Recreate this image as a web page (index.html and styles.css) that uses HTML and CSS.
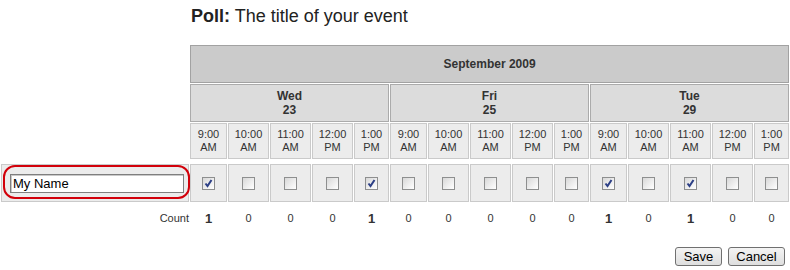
FILE: index.html
```html
<!DOCTYPE html>
<html>
<head>
<meta charset="utf-8">
<link rel="stylesheet" href="styles.css">
</head>
<body>
<h1 class="title"><b>Poll:</b> The title of your event</h1>
<table class="poll">
  <colgroup>
    <col class="c-name">
    <col class="c37"><col class="c41"><col class="c41"><col class="c41"><col class="c35">
    <col class="c37"><col class="c41"><col class="c41"><col class="c41"><col class="c35">
    <col class="c37"><col class="c41"><col class="c41"><col class="c41"><col class="c35">
  </colgroup>
  <tr class="month">
    <td class="blank"></td>
    <th colspan="15">September 2009</th>
  </tr>
  <tr class="days">
    <td class="blank"></td>
    <th colspan="5">Wed<br>23</th>
    <th colspan="5">Fri<br>25</th>
    <th colspan="5">Tue<br>29</th>
  </tr>
  <tr class="times">
    <td class="blank"></td>
    <td>9:00<br>AM</td><td>10:00<br>AM</td><td>11:00<br>AM</td><td>12:00<br>PM</td><td>1:00<br>PM</td>
    <td>9:00<br>AM</td><td>10:00<br>AM</td><td>11:00<br>AM</td><td>12:00<br>PM</td><td>1:00<br>PM</td>
    <td>9:00<br>AM</td><td>10:00<br>AM</td><td>11:00<br>AM</td><td>12:00<br>PM</td><td>1:00<br>PM</td>
  </tr>
  <tr class="spacer"><td colspan="16"></td></tr>
  <tr class="entry">
    <td class="name">
      <input class="name-input" type="text" value="My Name">
      <span class="ring"></span>
    </td>
    <td><span class="cb on"><svg viewBox="0 0 11 11" width="11" height="11"><path d="M2.5 5.5 L4.5 8 L8.5 2" fill="none" stroke="#2c3f86" stroke-width="2"/></svg></span></td>
    <td><span class="cb"></span></td>
    <td><span class="cb"></span></td>
    <td><span class="cb"></span></td>
    <td><span class="cb on"><svg viewBox="0 0 11 11" width="11" height="11"><path d="M2.5 5.5 L4.5 8 L8.5 2" fill="none" stroke="#2c3f86" stroke-width="2"/></svg></span></td>
    <td><span class="cb"></span></td>
    <td><span class="cb"></span></td>
    <td><span class="cb"></span></td>
    <td><span class="cb"></span></td>
    <td><span class="cb"></span></td>
    <td><span class="cb on"><svg viewBox="0 0 11 11" width="11" height="11"><path d="M2.5 5.5 L4.5 8 L8.5 2" fill="none" stroke="#2c3f86" stroke-width="2"/></svg></span></td>
    <td><span class="cb"></span></td>
    <td><span class="cb on"><svg viewBox="0 0 11 11" width="11" height="11"><path d="M2.5 5.5 L4.5 8 L8.5 2" fill="none" stroke="#2c3f86" stroke-width="2"/></svg></span></td>
    <td><span class="cb"></span></td>
    <td><span class="cb"></span></td>
  </tr>
  <tr class="count">
    <td class="label">Count</td>
    <td><b>1</b></td><td>0</td><td>0</td><td>0</td><td><b>1</b></td>
    <td>0</td><td>0</td><td>0</td><td>0</td><td>0</td>
    <td><b>1</b></td><td>0</td><td><b>1</b></td><td>0</td><td>0</td>
  </tr>
</table>
<div class="actions">
  <button class="btn btn-save" type="button">Save</button>
  <button class="btn btn-cancel" type="button">Cancel</button>
</div>
</body>
</html>
```

FILE: styles.css
```css
html, body {
  margin: 0;
  padding: 0;
  background: #fff;
  font-family: "Liberation Sans", Arial, sans-serif;
  color: #333;
}

.title {
  margin: 5px 0 17px 191px;
  font-size: 18px;
  line-height: 22px;
  font-weight: normal;
  color: #222;
}

.title b {
  font-weight: bold;
}

.poll {
  width: 790px;
  table-layout: fixed;
  border-collapse: separate;
  border-spacing: 1px;
}

.c-name { width: 188px; }
.c37 { width: 37px; }
.c41 { width: 41px; }
.c35 { width: 35px; }

.poll td, .poll th {
  box-sizing: border-box;
  padding: 0;
  text-align: center;
  vertical-align: middle;
}

.poll td.blank {
  border: none;
  background: transparent;
}

.month th {
  height: 38px;
  background: #cbcbcb;
  border: 1px solid #a2a2a2;
  font-size: 12px;
  font-weight: bold;
  color: #333;
}

.days th {
  height: 38px;
  background: #dcdcdc;
  border: 1px solid #ababab;
  font-size: 12px;
  line-height: 14px;
  font-weight: bold;
  color: #333;
}

.times td {
  height: 36px;
  background: #ececec;
  border: 1px solid #cacaca;
  font-size: 11px;
  line-height: 13px;
  color: #333;
}

.times td.blank {
  background: transparent;
  border: none;
}

.spacer td {
  height: 3px;
}

.entry td {
  height: 38px;
  background: #ececec;
  border: 1px solid #cacaca;
}

.entry td.name {
  position: relative;
  text-align: left;
  padding-left: 8px;
}

.name-input {
  display: block;
  box-sizing: border-box;
  width: 174px;
  height: 19px;
  margin: 0;
  padding: 0 2px;
  border: 1px solid #7f7f7f;
  box-shadow: inset 1px 1px 0 #c9c9c9;
  background: #fff;
  font-family: "Liberation Sans", Arial, sans-serif;
  font-size: 13px;
  color: #000;
  outline: none;
}

.ring {
  position: absolute;
  left: 1px;
  top: 0px;
  width: 187px;
  height: 34px;
  box-sizing: border-box;
  border: 2px solid #d2000a;
  border-radius: 12px;
  pointer-events: none;
}

.cb {
  display: inline-block;
  box-sizing: border-box;
  width: 13px;
  height: 13px;
  border: 1px solid #8e8f8f;
  background: linear-gradient(135deg, #d8d8d8 0%, #f4f4f4 70%, #ffffff 100%);
  vertical-align: middle;
  line-height: 0;
}

.cb svg {
  display: block;
}

.count td {
  height: 30px;
  font-size: 11px;
  color: #333;
}

.count td b {
  font-size: 13px;
  font-weight: bold;
}

.count td.label {
  text-align: right;
  padding-right: 0;
}

.actions {
  display: flex;
  justify-content: flex-end;
  gap: 6px;
  margin-top: 13px;
  padding-right: 5px;
}

.btn {
  box-sizing: border-box;
  height: 19px;
  padding: 0;
  border: 1px solid #707070;
  border-radius: 3px;
  background: linear-gradient(#f4f4f4, #dedede);
  font-family: "Liberation Sans", Arial, sans-serif;
  font-size: 13px;
  line-height: 15px;
  color: #000;
}

.btn-save { width: 47px; }
.btn-cancel { width: 57px; }
```
